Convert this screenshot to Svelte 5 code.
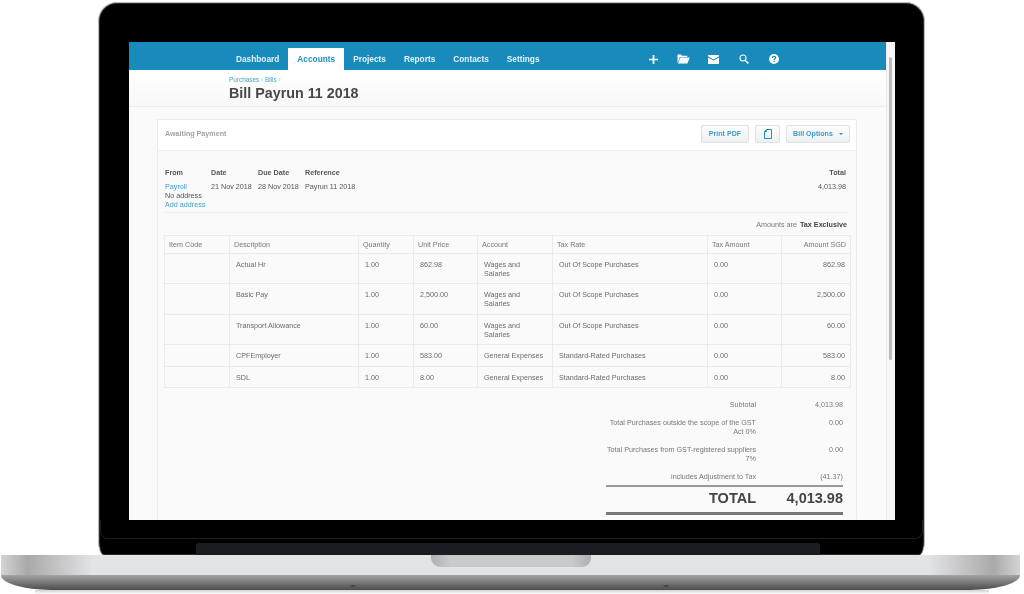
<script>
  const tabs = ['Dashboard', 'Accounts', 'Projects', 'Reports', 'Contacts', 'Settings'];

  const wages = 'Wages and Salaries';
  const general = 'General Expenses';
  const outScope = 'Out Of Scope Purchases';
  const standard = 'Standard-Rated Purchases';

  const lines = [
    { desc: 'Actual Hr', price: '862.98', account: wages, tax: outScope, h: 'r30' },
    { desc: 'Basic Pay', price: '2,500.00', account: wages, tax: outScope, h: 'r31' },
    { desc: 'Transport Allowance', price: '60.00', account: wages, tax: outScope, h: 'r30' },
    { desc: 'CPFEmployer', price: '583.00', account: general, tax: standard, h: 'r22' },
    { desc: 'SDL', price: '8.00', account: general, tax: standard, h: 'r21' }
  ];

  const heads = ['Item Code', 'Description', 'Quantity', 'Unit Price', 'Account', 'Tax Rate', 'Tax Amount', 'Amount SGD'];

  const totals = [
    { label: 'Subtotal', value: '4,013.98' },
    { label: 'Total Purchases outside the scope of the GST Act 0%', value: '0.00' },
    { label: 'Total Purchases from GST-registered suppliers 7%', value: '0.00' },
    { label: 'includes Adjustment to Tax', value: '(41.37)' }
  ];
</script>

<div class="mock">
  <div class="lid">
    <div class="screen">
      <div class="page">
        <nav class="nav">
          {#each tabs as tab}
            <span class="tab" class:active={tab === 'Accounts'}>{tab}</span>
          {/each}
          <div class="icons">
            <span class="ico">
              <svg width="11" height="11" viewBox="0 0 11 11"><path d="M5.5 1v9M1 5.5h9" stroke="#fff" stroke-width="1.7" /></svg>
            </span>
            <span class="ico">
              <svg width="13" height="10" viewBox="0 0 13 10"><path d="M0.5 9V1.2Q0.5 .6 1.1 .6H4L5 1.8H10.2V3H3L.5 9ZM1 9.6 3.4 3.6H12.8L10.4 9.6Z" fill="#fff" /></svg>
            </span>
            <span class="ico">
              <svg width="11" height="9" viewBox="0 0 11 9"><path d="M.6 0H10.4Q11 0 11 .6V1.2L5.5 4.4 0 1.2V.6Q0 0 .6 0ZM0 2.4 5.5 5.6 11 2.4V8.4Q11 9 10.4 9H.6Q0 9 0 8.4Z" fill="#fff" /></svg>
            </span>
            <span class="ico">
              <svg width="10" height="10" viewBox="0 0 10 10"><circle cx="4" cy="4" r="3" fill="none" stroke="#fff" stroke-width="1.1" /><path d="M6.2 6.2 9.4 9.4" stroke="#fff" stroke-width="1.6" /></svg>
            </span>
            <span class="ico">
              <svg width="10" height="10" viewBox="0 0 10 10"><circle cx="5" cy="5" r="5" fill="#fff" /><path d="M3.3 3.9Q3.4 2.3 5 2.3 6.7 2.3 6.7 3.6 6.7 4.4 5.8 4.9 5.1 5.3 5.1 6" fill="none" stroke="#188abb" stroke-width="1.2" /><rect x="4.4" y="6.7" width="1.3" height="1.3" fill="#188abb" /></svg>
            </span>
          </div>
        </nav>

        <header class="title">
          <div class="crumbs"><span>Purchases</span> › <span>Bills</span> ›</div>
          <h1>Bill Payrun 11 2018</h1>
        </header>

        <section class="card">
          <div class="card-head">
            <span class="status">Awaiting Payment</span>
            <span class="btn print">Print PDF</span>
            <span class="btn doc">
              <svg width="8" height="10" viewBox="0 0 8 10"><path d="M2.5 .5H7.5V9.5H.5V2.5Z" fill="none" stroke="#1d8fc0" stroke-width="1" /><path d="M.5 2.5H2.5V.5" fill="none" stroke="#1d8fc0" stroke-width="1" /></svg>
            </span>
            <span class="btn options">Bill Options <i class="caret"></i></span>
          </div>

          <div class="card-body">
            <div class="info">
              <div class="from">
                <b>From</b>
                <a>Payroll</a>
                <span>No address</span>
                <a>Add address</a>
              </div>
              <div class="date"><b>Date</b><span>21 Nov 2018</span></div>
              <div class="due"><b>Due Date</b><span>28 Nov 2018</span></div>
              <div class="ref"><b>Reference</b><span>Payrun 11 2018</span></div>
              <div class="sum"><b>Total</b><span>4,013.98</span></div>
            </div>

            <div class="amounts">Amounts are <b>Tax Exclusive</b></div>

            <table>
              <colgroup>
                <col class="c1" /><col class="c2" /><col class="c3" /><col class="c4" />
                <col class="c5" /><col class="c6" /><col class="c7" /><col class="c8" />
              </colgroup>
              <thead>
                <tr>
                  {#each heads as head}
                    <th>{head}</th>
                  {/each}
                </tr>
              </thead>
              <tbody>
                {#each lines as line}
                  <tr class={line.h}>
                    <td></td>
                    <td>{line.desc}</td>
                    <td>1.00</td>
                    <td>{line.price}</td>
                    <td>{line.account}</td>
                    <td>{line.tax}</td>
                    <td>0.00</td>
                    <td>{line.price}</td>
                  </tr>
                {/each}
              </tbody>
            </table>

            <div class="totals">
              {#each totals as row}
                <div class="total-row">
                  <span class="label">{row.label}</span>
                  <span class="value">{row.value}</span>
                </div>
              {/each}
              <div class="grand">
                <span class="label">TOTAL</span>
                <span class="value">4,013.98</span>
              </div>
            </div>
          </div>
        </section>
      </div>
      <div class="scroll"><i></i></div>
    </div>
    <div class="chin">
      <div class="bezel-line"></div>
      <div class="hinge"></div>
    </div>
  </div>

  <div class="base">
    <div class="notch"></div>
  </div>
  <div class="shadow"></div>
</div>

<style>
  :global(body) {
    margin: 0;
    background: #fff;
  }

  .mock {
    width: 1024px;
    height: 594px;
    overflow: hidden;
    padding-top: 2px;
    box-sizing: border-box;
    font-family: "Liberation Sans", Arial, sans-serif;
  }

  .lid {
    width: 827px;
    height: 553px;
    margin-left: 98px;
    box-sizing: border-box;
    padding-top: 39px;
    background: #000;
    border: 1px solid #b9b9b9;
    border-bottom: 0;
    border-radius: 19px 19px 6px 6px / 19px 19px 14px 14px;
    box-shadow: inset 0 0 0 1px #2a2a2a;
  }

  .screen {
    display: flex;
    width: 766px;
    height: 478px;
    margin-left: 30px;
    overflow: hidden;
    background: #fafafa;
  }

  .page {
    width: 757px;
    flex: none;
    filter: blur(0.4px);
  }

  .scroll {
    flex: 1;
    background: #f7f7f7;
    padding: 15px 3px 0 2px;
    border-left: 1px solid #e9e9e9;
  }

  .scroll i {
    display: block;
    height: 303px;
    background: #bdbdbd;
    border-radius: 2px;
  }

  .nav {
    display: flex;
    align-items: flex-end;
    height: 28px;
    padding-left: 98px;
    background: #188abb;
  }

  .tab {
    height: 22px;
    line-height: 23px;
    padding: 0 9px;
    font-size: 8.3px;
    font-weight: 700;
    color: #e8f3f8;
    white-space: nowrap;
  }

  .tab.active {
    background: #fff;
    color: #1d8fc0;
  }

  .icons {
    display: flex;
    margin-left: 90px;
    height: 28px;
  }

  .ico {
    display: flex;
    align-items: center;
    justify-content: center;
    width: 30px;
    height: 34px;
  }

  .title {
    height: 30px;
    padding: 6px 0 0 100px;
    background: linear-gradient(#fff, #f8f8f8);
    border-bottom: 1px solid #ececec;
  }

  .crumbs {
    font-size: 6.4px;
    line-height: 8px;
    color: #9cc;
  }

  .crumbs span {
    color: #47a6cf;
  }

  h1 {
    margin: 1px 0 0;
    font-size: 14.3px;
    line-height: 17px;
    font-weight: 700;
    color: #484848;
  }

  .card {
    width: 700px;
    height: 400px;
    margin: 12px 0 0 28px;
    box-sizing: border-box;
    border: 1px solid #ececec;
    border-bottom: 0;
    background: #fafafa;
  }

  .card-head {
    display: flex;
    align-items: center;
    gap: 6px;
    height: 31px;
    box-sizing: border-box;
    padding: 0 6px 2px 7px;
    background: #fff;
    border-bottom: 1px solid #efefef;
  }

  .status {
    margin-right: auto;
    margin-bottom: 1px;
    font-size: 7.15px;
    font-weight: 700;
    color: #a2a2a2;
  }

  .btn {
    display: flex;
    align-items: center;
    justify-content: center;
    height: 18px;
    box-sizing: border-box;
    background: linear-gradient(#fdfdfd, #edf0f2);
    border: 1px solid #dfe2e4;
    border-radius: 2px;
    font-size: 7.1px;
    font-weight: 700;
    color: #3d9cc8;
  }

  .print { width: 48px; }
  .doc { width: 25px; }
  .options { width: 64px; }

  .caret {
    width: 0;
    height: 0;
    margin-left: 6px;
    border: 2.5px solid transparent;
    border-top-color: #2d90bf;
    border-bottom: 0;
  }

  .card-body {
    padding: 0 6px;
  }

  .info {
    display: flex;
    height: 44px;
    margin: 0 1px;
    padding-top: 17px;
    border-bottom: 1px solid #ececec;
    font-size: 7.2px;
    line-height: 9px;
    color: #555;
  }

  .info > div {
    display: flex;
    flex-direction: column;
  }

  .info b {
    margin-bottom: 5px;
    color: #555;
  }

  .info a {
    color: #3da2cd;
  }

  .from { width: 46px; }
  .date { width: 47px; }
  .due { width: 47px; }
  .ref { width: 100px; }

  .sum {
    margin-left: auto;
    align-items: flex-end;
    padding-right: 3px;
  }

  .amounts {
    height: 22px;
    line-height: 23px;
    text-align: right;
    font-size: 7.2px;
    color: #777;
    padding-right: 3px;
  }

  .amounts b {
    margin-left: 1px;
    color: #444;
  }

  table {
    width: 686px;
    table-layout: fixed;
    border-collapse: collapse;
    font-size: 7.2px;
    color: #6b6b6b;
  }

  .c1 { width: 65px; }
  .c2 { width: 129px; }
  .c3 { width: 55px; }
  .c4 { width: 64px; }
  .c5 { width: 75px; }
  .c6 { width: 155px; }
  .c7 { width: 74px; }
  .c8 { width: 69px; }

  th, td {
    border: 1px solid #ebebeb;
    text-align: left;
    box-sizing: border-box;
  }

  th {
    height: 18px;
    padding: 0 4px;
    font-weight: 400;
    color: #777;
  }

  td {
    vertical-align: top;
    padding: 6px 5px 0 6px;
    line-height: 9px;
  }

  th:last-child, td:last-child {
    text-align: right;
  }

  tr.r30 td { height: 30px; }
  tr.r31 td { height: 31px; }
  tr.r22 td { height: 22px; }
  tr.r21 td { height: 21px; }

  .totals {
    width: 237px;
    margin: 12px 0 0 442px;
    font-size: 7.2px;
    line-height: 9px;
    color: #777;
  }

  .total-row {
    display: flex;
    justify-content: space-between;
    margin-bottom: 9px;
  }

  .total-row .label {
    width: 150px;
    text-align: right;
  }

  .grand {
    display: flex;
    justify-content: space-between;
    align-items: center;
    height: 22px;
    margin-top: -5px;
    padding-bottom: 3px;
    border-top: 2px solid #999;
    border-bottom: 3px solid #777;
    font-size: 14.5px;
    font-weight: 700;
    color: #444;
  }

  .grand .label {
    width: 150px;
    text-align: right;
  }

  .chin {
    height: 35px;
    margin: 0 1px;
  }

  .bezel-line {
    height: 19px;
    border: 1px solid #1c1c1c;
    border-top: 0;
    border-radius: 0 0 8px 8px;
    box-sizing: border-box;
  }

  .hinge {
    width: 624px;
    height: 12px;
    margin: 4px 0 0 96px;
    background: #1b1c1f;
    border-radius: 3px 3px 0 0;
  }

  .base {
    height: 35px;
    margin-left: 1px;
    width: 1019px;
    background:
      radial-gradient(ellipse 4px 1.2px at 352px 31px, #333, transparent),
      radial-gradient(ellipse 4px 1.2px at 665px 31px, #333, transparent),
      linear-gradient(transparent 20px, #a4a4a4 20px, #4b4b4b 100%),
      linear-gradient(90deg, #d4d4d4 0, #a9a9a9 2.6%, #e3e4e6 9%, #e3e4e6 91%, #a9a9a9 97.4%, #d4d4d4 100%);
    border-radius: 0 0 50px 50px / 0 0 15px 15px;
  }

  .notch {
    width: 160px;
    height: 12px;
    margin: 0 auto;
    background: linear-gradient(90deg, #b0b0b0, #c8c9cb 12%, #c8c9cb 88%, #b0b0b0);
    border-radius: 0 0 9px 9px;
  }

  .shadow {
    height: 4px;
    margin: 0 35px;
    background: linear-gradient(#cfcfcf, #fff);
  }
</style>
